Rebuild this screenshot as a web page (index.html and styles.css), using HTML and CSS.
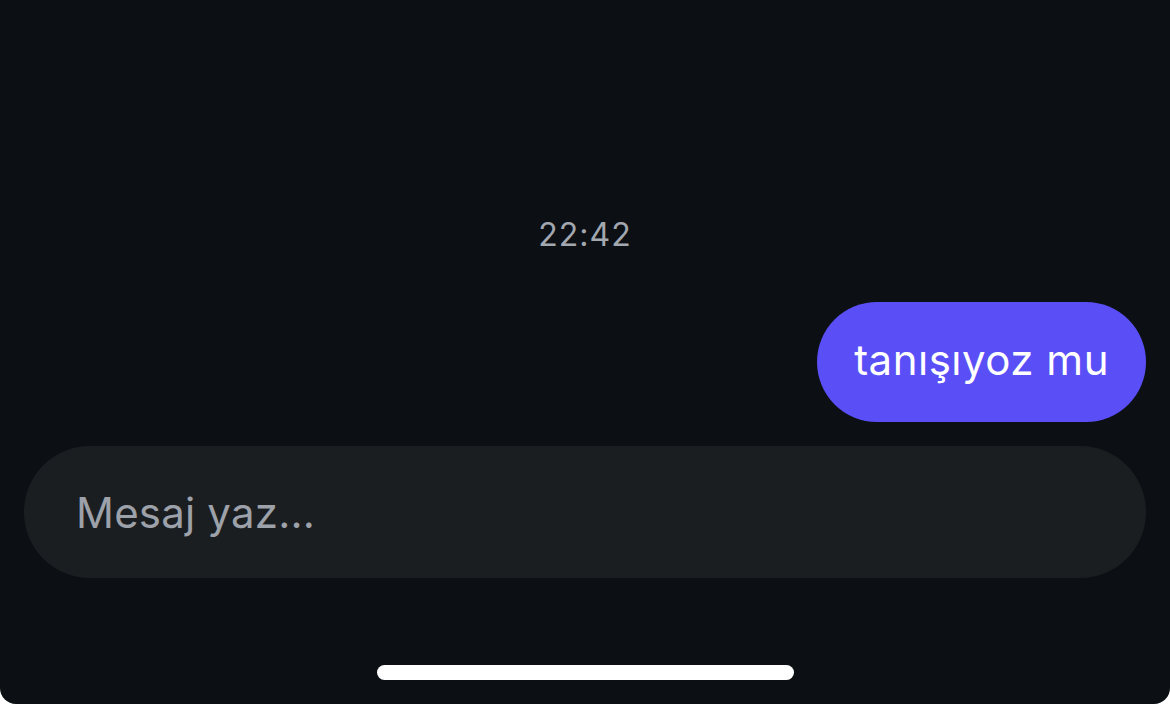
FILE: index.html
```html
<!DOCTYPE html>
<html lang="tr">
<head>
<meta charset="utf-8">
<link rel="stylesheet" href="styles.css">
</head>
<body>
<div class="screen">
  <div class="chat">
    <div class="time">22:42</div>
    <div class="row-out">
      <div class="bubble">tanışıyoz mu</div>
    </div>
  </div>
  <div class="composer">
    <span class="placeholder">Mesaj yaz...</span>
  </div>
  <div class="home-area">
    <div class="home-indicator"></div>
  </div>
</div>
</body>
</html>
```
FILE: styles.css
```css
* { box-sizing: border-box; }
html, body {
  margin: 0;
  padding: 0;
  background: #ffffff;
}
body {
  width: 1170px;
  height: 704px;
  overflow: hidden;
  font-family: Inter, "Noto Sans", "Liberation Sans", sans-serif;
}
.screen {
  width: 1170px;
  height: 704px;
  background: #0c1014;
  border-radius: 0 0 16px 16px;
  display: flex;
  flex-direction: column;
  justify-content: flex-end;
  padding: 0 24px;
}
.chat {
  display: flex;
  flex-direction: column;
}
.time {
  text-align: center;
  color: #a2a7b0;
  font-size: 32px;
  line-height: 40px;
  letter-spacing: 1px;
  margin-bottom: 47px;
}
.row-out {
  display: flex;
  justify-content: flex-end;
}
.bubble {
  background: #5a4ff6;
  color: #ffffff;
  height: 120px;
  border-radius: 60px;
  padding: 0 37px 6px 37px;
  font-size: 42px;
  display: flex;
  align-items: center;
  letter-spacing: 0.5px;
}
.composer {
  margin-top: 24px;
  height: 132px;
  border-radius: 66px;
  background: #1b1e21;
  display: flex;
  align-items: center;
  padding: 0 52px;
}
.placeholder {
  color: #9da1a9;
  font-size: 42px;
  letter-spacing: 0.2px;
}
.home-area {
  height: 126px;
  display: flex;
  justify-content: center;
  padding-top: 87px;
}
.home-indicator {
  width: 417px;
  height: 15px;
  background: #ffffff;
  border-radius: 8px;
}
```
